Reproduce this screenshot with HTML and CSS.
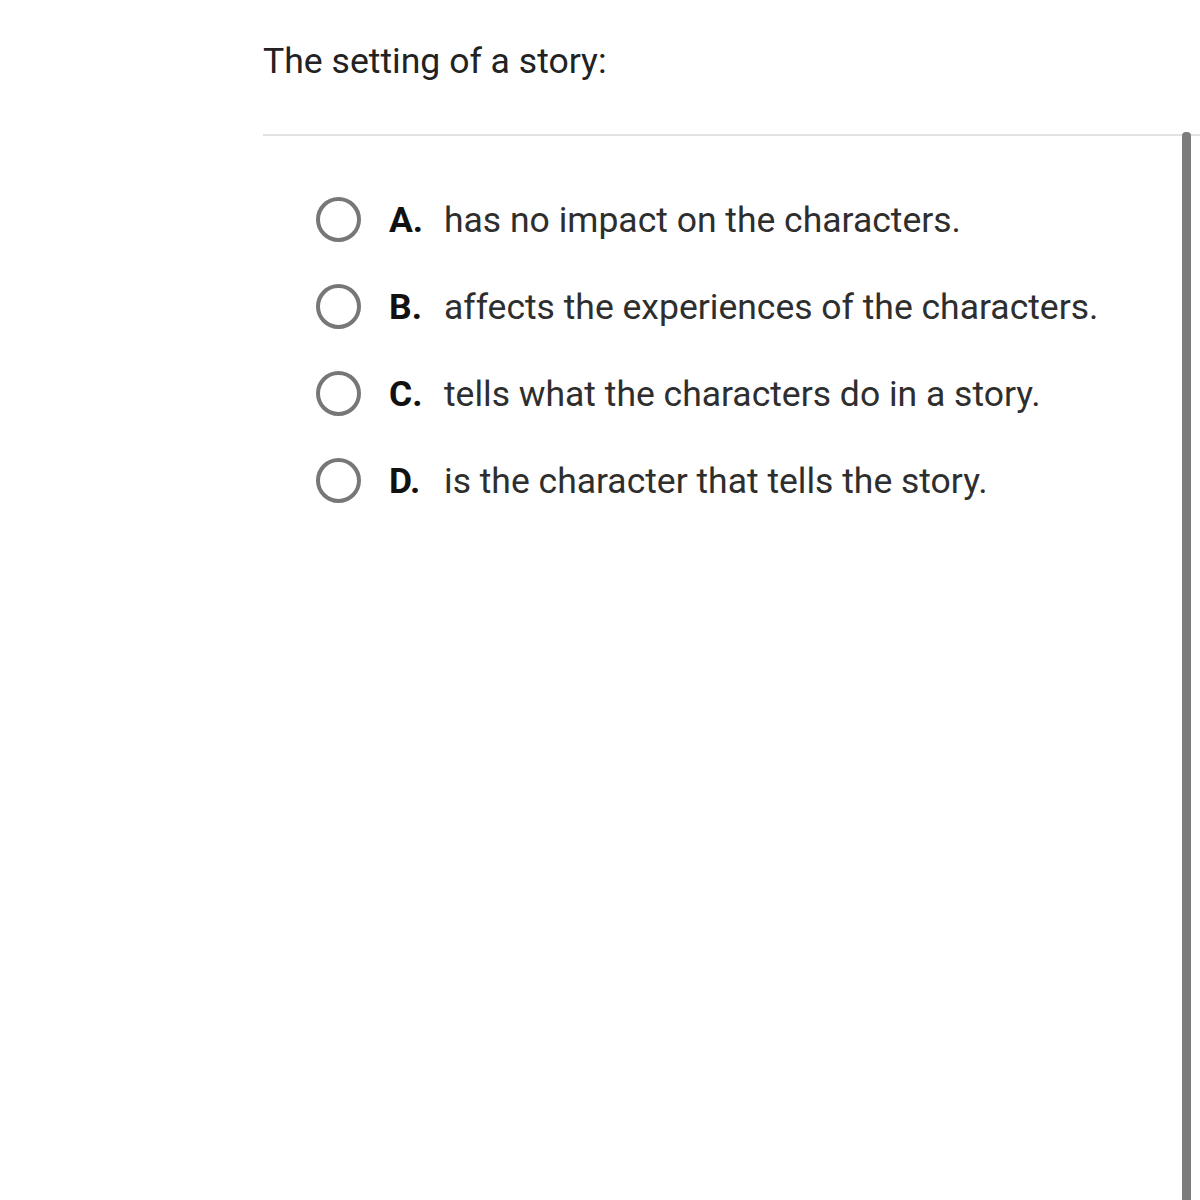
FILE: index.html
```html
<!DOCTYPE html>
<html>
<head>
<meta charset="utf-8">
<link rel="stylesheet" href="styles.css">
</head>
<body>
<div class="page">
  <h1 class="question">The setting of a story:</h1>
  <div class="answers">
    <div class="scrollbar"></div>
    <ul class="options">
      <li class="option"><span class="radio"></span><span class="letter">A.</span><span class="text">has no impact on the characters.</span></li>
      <li class="option"><span class="radio"></span><span class="letter">B.</span><span class="text">affects the experiences of the characters.</span></li>
      <li class="option"><span class="radio"></span><span class="letter">C.</span><span class="text">tells what the characters do in a story.</span></li>
      <li class="option"><span class="radio"></span><span class="letter">D.</span><span class="text">is the character that tells the story.</span></li>
    </ul>
  </div>
</div>
</body>
</html>
```

FILE: styles.css
```css
html, body {
  margin: 0;
  padding: 0;
  background: #ffffff;
  height: 100%;
  overflow: hidden;
}
body {
  font-family: Roboto, "Liberation Sans", sans-serif;
}
.page {
  padding-left: 263px;
  height: 1200px;
  display: flex;
  flex-direction: column;
}
.question {
  margin: 0;
  padding-top: 37px;
  height: 136px;
  box-sizing: border-box;
  font-size: 35.6px;
  font-weight: 400;
  line-height: 48px;
  color: #222222;
  border-bottom: 2px solid #e2e2e2;
}
.answers {
  position: relative;
  flex: 1;
}
.scrollbar {
  position: absolute;
  right: 9px;
  top: -4px;
  bottom: 0;
  width: 9px;
  background: #7c7c7c;
  border-radius: 4px 4px 0 0;
}
.options {
  list-style: none;
  margin: 0;
  padding: 61px 0 0 53px;
  display: flex;
  flex-direction: column;
  gap: 42px;
}
.option {
  display: flex;
  align-items: center;
  height: 45px;
}
.radio {
  width: 37px;
  height: 37px;
  border: 4px solid #777777;
  border-radius: 50%;
  flex: none;
  margin-right: 28px;
}
.letter {
  width: 55px;
  font-weight: 700;
  font-size: 35.5px;
  color: #111111;
  flex: none;
}
.text {
  font-size: 35.5px;
  color: #2e2e2e;
}
```
